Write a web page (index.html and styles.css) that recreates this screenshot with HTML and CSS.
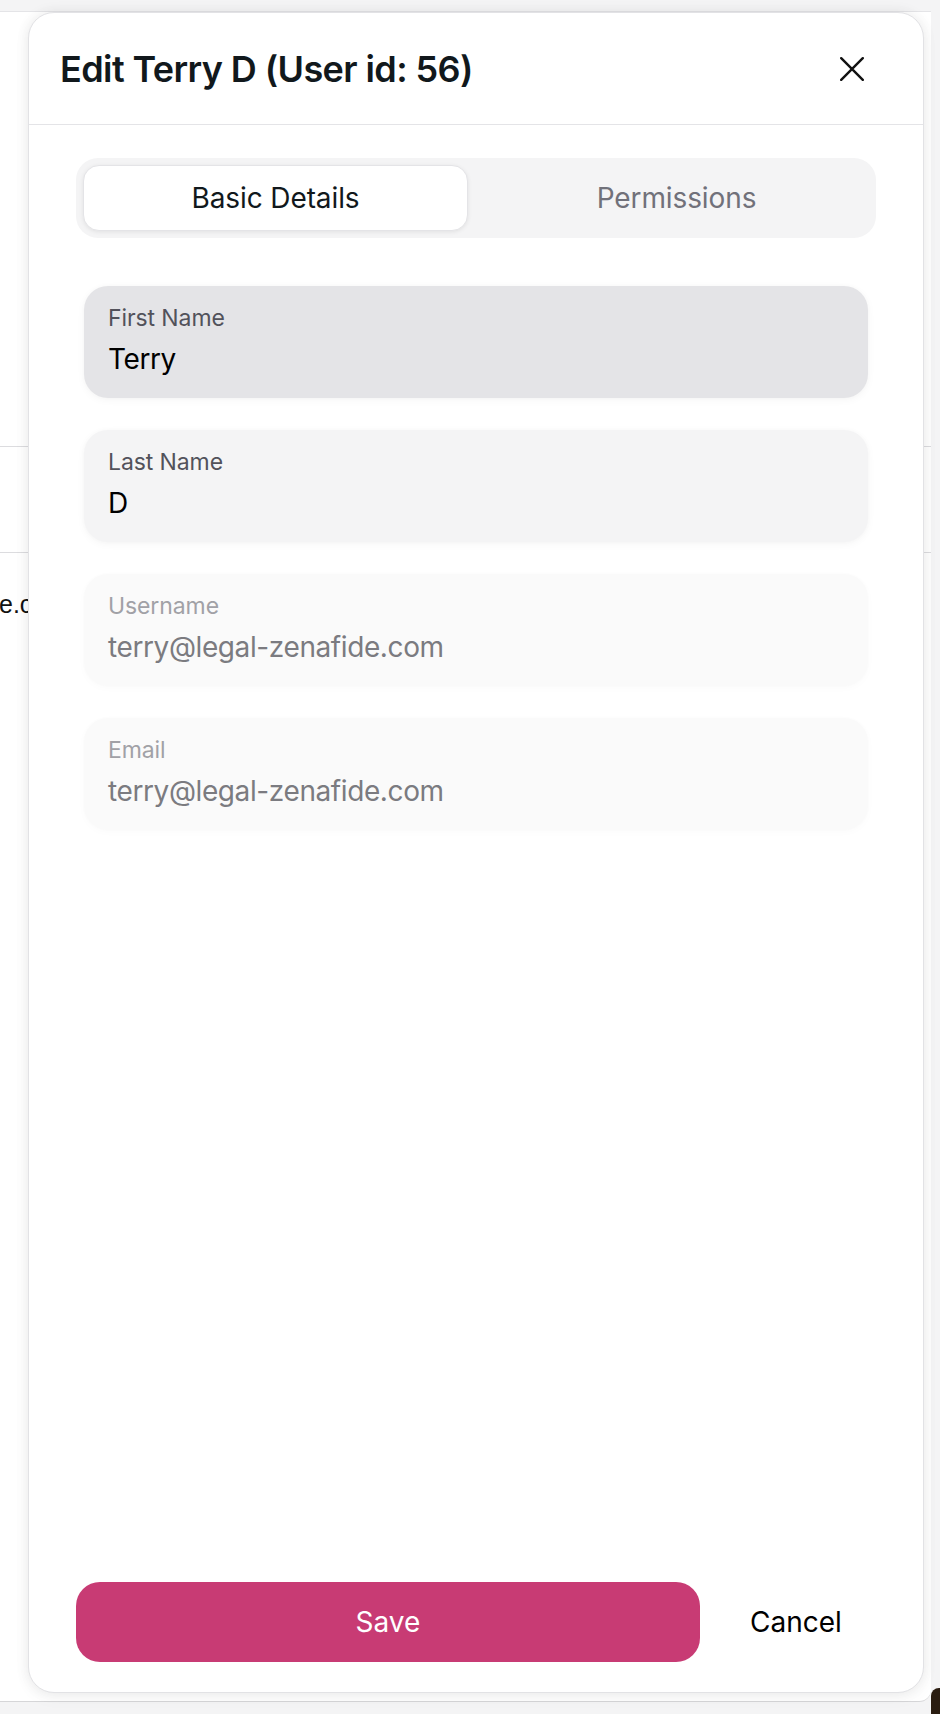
FILE: index.html
```html
<!DOCTYPE html>
<html lang="en">
<head>
<meta charset="utf-8">
<title>Edit Terry D</title>
<link rel="stylesheet" href="styles.css">
</head>
<body>
  <div class="page">
    <div class="bg-row bg-row-first"></div>
    <div class="bg-row bg-row-mid"></div>
    <div class="bg-row bg-row-last"><span class="bg-cell">e.com</span></div>
  </div>
  <div class="desk-corner"></div>

  <section class="modal" role="dialog" aria-labelledby="modal-title">
    <header class="modal-header">
      <h2 class="modal-title" id="modal-title">Edit Terry D (User id: 56)</h2>
      <button class="close-btn" type="button" aria-label="Close">
        <svg class="close-icon" viewBox="0 0 24 24" width="24" height="24" aria-hidden="true">
          <path d="M1.2 1.2 L22.8 22.8 M22.8 1.2 L1.2 22.8" fill="none" stroke="currentColor" stroke-width="2.4" stroke-linecap="round"/>
        </svg>
      </button>
    </header>

    <div class="modal-body">
      <div class="tabs" role="tablist">
        <button class="tab tab-active" role="tab" type="button">Basic Details</button>
        <button class="tab" role="tab" type="button">Permissions</button>
      </div>

      <div class="fields">
        <div class="field field-hover">
          <span class="field-label">First Name</span>
          <span class="field-value">Terry</span>
        </div>
        <div class="field">
          <span class="field-label">Last Name</span>
          <span class="field-value">D</span>
        </div>
        <div class="field field-disabled">
          <span class="field-label">Username</span>
          <span class="field-value">terry@legal-zenafide.com</span>
        </div>
        <div class="field field-disabled">
          <span class="field-label">Email</span>
          <span class="field-value">terry@legal-zenafide.com</span>
        </div>
      </div>
    </div>

    <footer class="modal-footer">
      <button class="btn-save" type="button">Save</button>
      <button class="btn-cancel" type="button">Cancel</button>
    </footer>
  </section>
</body>
</html>
```

FILE: styles.css
```css
* {
  box-sizing: border-box;
}

html,
body {
  margin: 0;
  padding: 0;
}

body {
  width: 940px;
  height: 1714px;
  position: relative;
  overflow: hidden;
  background: #f4f4f5;
  font-family: "Inter", "Noto Sans", sans-serif;
  color: #11181c;
}

/* background page behind the dialog */
.page {
  margin-top: 11px;
  height: 1691px;
  width: 931px;
  background: #ffffff;
  border-top: 1px solid #e4e4e7;
  border-bottom: 1px solid #d6d6d8;
  border-bottom-right-radius: 12px;
  display: flex;
  flex-direction: column;
}

.bg-row-first {
  height: 434px;
}

.bg-row-mid {
  height: 107px;
  border-top: 1px solid #dcdcdf;
  border-bottom: 1px solid #dcdcdf;
}

.bg-row-last {
  padding-top: 37px;
}

.bg-cell {
  display: block;
  margin-left: -1px;
  font-family: "Liberation Sans", Arial, sans-serif;
  font-size: 25px;
  color: #111;
}

.desk-corner {
  position: absolute;
  right: 0;
  bottom: 0;
  width: 9px;
  height: 26px;
  background: #2a1c10;
  border-top-left-radius: 8px;
}

/* dialog */
.modal {
  position: absolute;
  top: 12px;
  left: 28px;
  width: 896px;
  height: 1681px;
  background: #ffffff;
  border: 1px solid #e2e2e5;
  border-radius: 26px;
  box-shadow: 0 0 14px rgba(0, 0, 0, 0.07), 0 4px 18px rgba(0, 0, 0, 0.04);
  display: flex;
  flex-direction: column;
}

.modal-header {
  height: 112px;
  flex: none;
  display: flex;
  align-items: center;
  padding: 0 47px 0 31px;
  border-bottom: 1px solid #e4e4e7;
}

.modal-title {
  flex: 1;
  margin: 0;
  font-size: 36px;
  font-weight: 600;
  line-height: 1;
  letter-spacing: -0.6px;
  color: #11181c;
}

.close-btn {
  width: 48px;
  height: 48px;
  border: 0;
  padding: 0;
  background: transparent;
  display: flex;
  align-items: center;
  justify-content: center;
  color: #111111;
}

.close-icon {
  display: block;
}

.modal-body {
  flex: 1;
  padding: 33px 47px 0;
  display: flex;
  flex-direction: column;
}

.tabs {
  height: 80px;
  padding: 7px;
  background: #f4f4f5;
  border-radius: 22px;
  display: grid;
  grid-template-columns: 1fr 1fr;
  column-gap: 16px;
}

.tab {
  border: 0;
  background: transparent;
  border-radius: 16px;
  font-family: inherit;
  font-size: 28px;
  font-weight: 400;
  letter-spacing: -0.1px;
  color: #71717a;
  padding: 0;
}

.tab-active {
  background: #ffffff;
  color: #11181c;
  border: 1px solid #e4e4e7;
  box-shadow: 0 1px 4px rgba(0, 0, 0, 0.08);
}

.fields {
  margin-top: 48px;
  padding: 0 8px;
  display: flex;
  flex-direction: column;
  gap: 32px;
}

.field {
  height: 112px;
  padding: 16px 24px 20px;
  background: #f4f4f5;
  border-radius: 24px;
  box-shadow: 0 0 5px rgba(0, 0, 0, 0.02), 0 2px 8px rgba(0, 0, 0, 0.04);
  display: flex;
  flex-direction: column;
}

.field-hover {
  background: #e4e4e7;
}

.field-label {
  font-size: 23px;
  line-height: 32px;
  letter-spacing: -0.1px;
  color: #52525b;
}

.field-value {
  margin-top: 7px;
  font-size: 28px;
  line-height: 36px;
  letter-spacing: -0.4px;
  color: #000000;
}

.field-disabled {
  background: #fafafa;
  box-shadow: 0 0 5px rgba(0, 0, 0, 0.01), 0 2px 8px rgba(0, 0, 0, 0.02);
}

.field-disabled .field-label {
  color: #a1a1a6;
}

.field-disabled .field-value {
  color: #7b7b80;
}

.modal-footer {
  flex: none;
  display: flex;
  gap: 16px;
  padding: 0 47px 30px;
}

.btn-save {
  flex: 1;
  height: 80px;
  border: 0;
  border-radius: 24px;
  background: #c83b74;
  color: #ffffff;
  font-family: inherit;
  font-size: 28px;
  font-weight: 400;
}

.btn-cancel {
  width: 160px;
  height: 80px;
  border: 0;
  background: transparent;
  color: #000000;
  font-family: inherit;
  font-size: 28px;
  font-weight: 400;
}
```
